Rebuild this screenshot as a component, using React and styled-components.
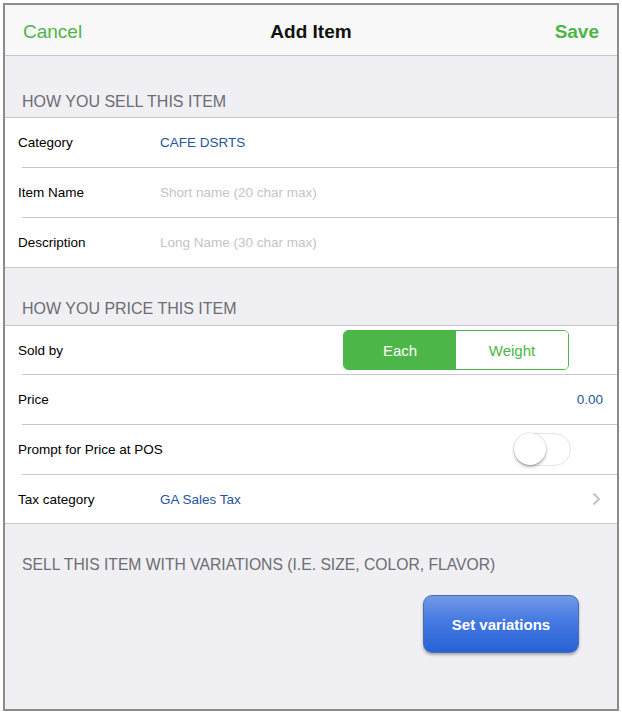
import React, { useState } from 'react';
import styled, { createGlobalStyle } from 'styled-components';

const Global = createGlobalStyle`
  html, body { margin: 0; padding: 0; background: #fff; }
  body { font-family: "Liberation Sans", Arial, sans-serif; }
`;

const GREEN = '#4cb648';
const BLUE = '#1f56a0';

const Frame = styled.div`
  margin: 3px;
  width: 612px;
  height: 704px;
  border: 2px solid #8c8c8c;
  background: #efeff4;
  display: flex;
  flex-direction: column;
  overflow: hidden;
`;

const NavBar = styled.div`
  height: 51px;
  flex-shrink: 0;
  background: #f8f8f8;
  border-bottom: 1px solid #c8c7cc;
  display: flex;
  align-items: center;
  justify-content: space-between;
  padding: 4px 18px 0 18px;
  box-sizing: border-box;
  position: relative;
`;

const NavButton = styled.span`
  font-size: 19px;
  color: ${GREEN};
  font-weight: ${(p) => (p.$bold ? 700 : 400)};
`;

const NavTitle = styled.span`
  position: absolute;
  left: 0;
  right: 0;
  top: 4px;
  bottom: 0;
  display: flex;
  align-items: center;
  justify-content: center;
  font-size: 19px;
  color: #111;
  font-weight: 700;
  pointer-events: none;
`;

const SectionHeader = styled.div`
  height: ${(p) => p.$h}px;
  display: flex;
  align-items: flex-end;
  padding: 0 0 ${(p) => p.$pb}px 17px;
  font-size: ${(p) => p.$fs || 16}px;
  color: #6d6d72;
  box-sizing: border-box;
  flex-shrink: 0;
  white-space: nowrap;
`;

const Group = styled.div`
  background: #fff;
  border-top: 1px solid #c8c7cc;
  border-bottom: 1px solid #c8c7cc;
`;

const Row = styled.div`
  height: ${(p) => p.$h || 49}px;
  display: flex;
  align-items: center;
  padding: 0 14px 0 13px;
  box-sizing: border-box;
  position: relative;
  margin-top: ${(p) => (p.$first ? 0 : 1)}px;

  &::before {
    content: '';
    display: ${(p) => (p.$first ? 'none' : 'block')};
    position: absolute;
    top: -1px;
    left: 17px;
    right: 0;
    height: 1px;
    background: #c8c7cc;
  }
`;

const Label = styled.span`
  font-size: 13.5px;
  color: #000;
  width: 142px;
  flex-shrink: 0;
  white-space: nowrap;
`;

const Value = styled.span`
  font-size: 13.5px;
  color: ${(p) => (p.$placeholder ? '#c4c4c9' : BLUE)};
  flex: 1;
  white-space: nowrap;
`;

const Right = styled.div`
  margin-left: auto;
  display: flex;
  align-items: center;
  margin-right: ${(p) => p.$mr || 0}px;
`;

const Segmented = styled.div`
  display: flex;
  width: 226px;
  height: 40px;
  border: 1px solid ${GREEN};
  border-radius: 5px;
  overflow: hidden;
  box-sizing: border-box;
`;

const Segment = styled.button`
  flex: 1;
  border: none;
  margin: 0;
  padding: 0;
  font-family: inherit;
  font-size: 15px;
  background: ${(p) => (p.$active ? GREEN : '#fff')};
  color: ${(p) => (p.$active ? '#fff' : GREEN)};
  cursor: pointer;
`;

const Toggle = styled.div`
  width: 57px;
  height: 33px;
  border-radius: 17px;
  border: 1.5px solid #e3e3e3;
  box-sizing: border-box;
  background: #fff;
  position: relative;
`;

const Knob = styled.div`
  position: absolute;
  top: -1px;
  left: -1px;
  width: 32px;
  height: 32px;
  border-radius: 50%;
  background: #fff;
  box-shadow: 0 2px 3px rgba(0, 0, 0, 0.3), 0 0 0 0.5px rgba(0, 0, 0, 0.12);
`;

const Footer = styled.div`
  flex: 1;
  display: flex;
  flex-direction: column;
`;

const ButtonRow = styled.div`
  display: flex;
  justify-content: flex-end;
  padding: 0 38px 0 0;
  margin-top: 21px;
`;

const BlueButton = styled.button`
  width: 156px;
  height: 58px;
  border-radius: 9px;
  border: 1px solid #4a6fae;
  background: linear-gradient(to bottom, #7199e6 0%, #4579e2 45%, #2762d6 100%);
  box-shadow: 0 2px 3px rgba(0, 0, 0, 0.3);
  color: #fff;
  font-family: inherit;
  font-size: 15px;
  font-weight: 700;
  cursor: pointer;
`;

const Chevron = () => (
  <svg width="9" height="14" viewBox="0 0 9 14">
    <path d="M1.5 1.5 L7 7 L1.5 12.5" fill="none" stroke="#c2c2c7" strokeWidth="2" />
  </svg>
);

export default function App() {
  const [soldBy, setSoldBy] = useState('each');
  return (
    <>
      <Global />
      <Frame>
        <NavBar>
          <NavButton>Cancel</NavButton>
          <NavTitle>Add Item</NavTitle>
          <NavButton $bold>Save</NavButton>
        </NavBar>

        <SectionHeader $h={61} $pb={6}>HOW YOU SELL THIS ITEM</SectionHeader>
        <Group>
          <Row $first>
            <Label>Category</Label>
            <Value>CAFE DSRTS</Value>
          </Row>
          <Row>
            <Label>Item Name</Label>
            <Value $placeholder>Short name (20 char max)</Value>
          </Row>
          <Row>
            <Label>Description</Label>
            <Value $placeholder>Long Name (30 char max)</Value>
          </Row>
        </Group>

        <SectionHeader $h={57} $pb={7}>HOW YOU PRICE THIS ITEM</SectionHeader>
        <Group>
          <Row $first $h={48}>
            <Label>Sold by</Label>
            <Right $mr={34}>
              <Segmented>
                <Segment $active={soldBy === 'each'} onClick={() => setSoldBy('each')}>Each</Segment>
                <Segment $active={soldBy === 'weight'} onClick={() => setSoldBy('weight')}>Weight</Segment>
              </Segmented>
            </Right>
          </Row>
          <Row>
            <Label>Price</Label>
            <Right $mr={0}>
              <Value>0.00</Value>
            </Right>
          </Row>
          <Row>
            <Label>Prompt for Price at POS</Label>
            <Right $mr={32}>
              <Toggle>
                <Knob />
              </Toggle>
            </Right>
          </Row>
          <Row $h={48}>
            <Label>Tax category</Label>
            <Value>GA Sales Tax</Value>
            <Right $mr={2}>
              <Chevron />
            </Right>
          </Row>
        </Group>

        <Footer>
          <SectionHeader $h={50} $pb={0} $fs={15.7}>SELL THIS ITEM WITH VARIATIONS (I.E. SIZE, COLOR, FLAVOR)</SectionHeader>
          <ButtonRow>
            <BlueButton>Set variations</BlueButton>
          </ButtonRow>
        </Footer>
      </Frame>
    </>
  );
}
